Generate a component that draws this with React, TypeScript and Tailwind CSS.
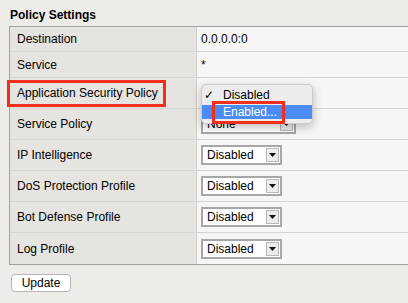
import React from 'react';

const Select = ({ value, width }: any) => (
    <div
        className="flex h-[20px] items-stretch border-2 border-[#a7a7a7] bg-white"
        style={{ width }}
    >
        <span className="flex-1 pl-[4px] text-[12px] leading-[16px] text-black">{value}</span>
        <span className="m-[1px] flex w-[13px] items-center justify-center border border-[#b9b9b9] bg-[#ececec]">
            <svg width="7" height="4" viewBox="0 0 7 4">
                <path d="M0 0h7L3.5 4z" fill="#111" />
            </svg>
        </span>
    </div>
);

const rows = [
    { label: 'Destination', h: 'h-[25px]', value: <span className="text-[12px]">0.0.0.0:0</span> },
    { label: 'Service', h: 'h-[26px]', value: <span className="text-[12px]">*</span> },
    { label: 'Application Security Policy', h: 'h-[31px]', asp: true },
    { label: 'Service Policy', h: 'h-[31px]', value: <Select value="None" width={95} /> },
    { label: 'IP Intelligence', h: 'h-[31px]', value: <Select value="Disabled" width={81} /> },
    { label: 'DoS Protection Profile', h: 'h-[31px]', value: <Select value="Disabled" width={81} /> },
    { label: 'Bot Defense Profile', h: 'h-[31px]', value: <Select value="Disabled" width={81} /> },
    { label: 'Log Profile', h: 'h-[31px]', value: <Select value="Disabled" width={81} /> },
];

export default function App() {
    return (
        <div
            className="h-[303px] w-[408px] overflow-hidden bg-[#edece8] text-black"
            style={{ fontFamily: '"Liberation Sans", Arial, sans-serif' }}
        >
            <div className="h-[26px] pl-[10px] pt-[8px] text-[12px] font-bold leading-[14px]">
                Policy Settings
            </div>
            <div className="ml-[9px] border-l border-t border-b border-t-[#a3a29e] border-b-[#a3a29e] border-l-[#a3a29e]">
                {rows.map((r, i) => (
                    <div
                        key={i}
                        className={
                            'grid grid-cols-[187px_1fr] ' +
                            r.h +
                            (i < rows.length - 1 ? ' border-b border-[#d6d5d1]' : '')
                        }
                    >
                        <div className="relative flex items-center border-r border-[#d0cfcb] bg-[#e5e4e0] pl-[7px] text-[12px]">
                            {r.label}
                            {r.asp && (
                                <div className="absolute left-[-3px] top-[2px] h-[27px] w-[159px] border-[3px] border-[#f0301c]" />
                            )}
                        </div>
                        <div className={'relative flex items-center bg-[#f7f6f4] pl-[4px]' + (r.asp ? ' z-10' : '')}>
                            {r.asp ? (
                                <>
                                    <div className="absolute left-[4px] top-[6px] z-10 h-[40px] w-[112px] rounded-[5px] border border-[#cbcbcb] bg-[#ececec] pt-[3px] shadow-[0_3px_10px_rgba(0,0,0,0.25)]">
                                        <div className="flex h-[15px] items-center text-[12px] leading-[15px]">
                                            <span className="w-[21px] pl-[2px]">✓</span>
                                            <span>Disabled</span>
                                        </div>
                                        <div className="mt-[2px] flex h-[14px] items-center bg-[#4a8cf6] text-[12px] leading-[14px] text-white">
                                            <span className="w-[21px]" />
                                            <span>Enabled...</span>
                                        </div>
                                    </div>
                                    <div className="absolute left-[15px] top-[23px] z-20 h-[23px] w-[73px] border-[3px] border-[#f0301c]" />
                                </>
                            ) : (
                                r.value
                            )}
                        </div>
                    </div>
                ))}
            </div>
            <div className="pl-[11px] pt-[5px]">
                <button className="h-[18px] w-[60px] rounded-[4px] border border-[#b5b5b5] bg-white text-[12px] leading-[16px]">
                    Update
                </button>
            </div>
        </div>
    );
}
